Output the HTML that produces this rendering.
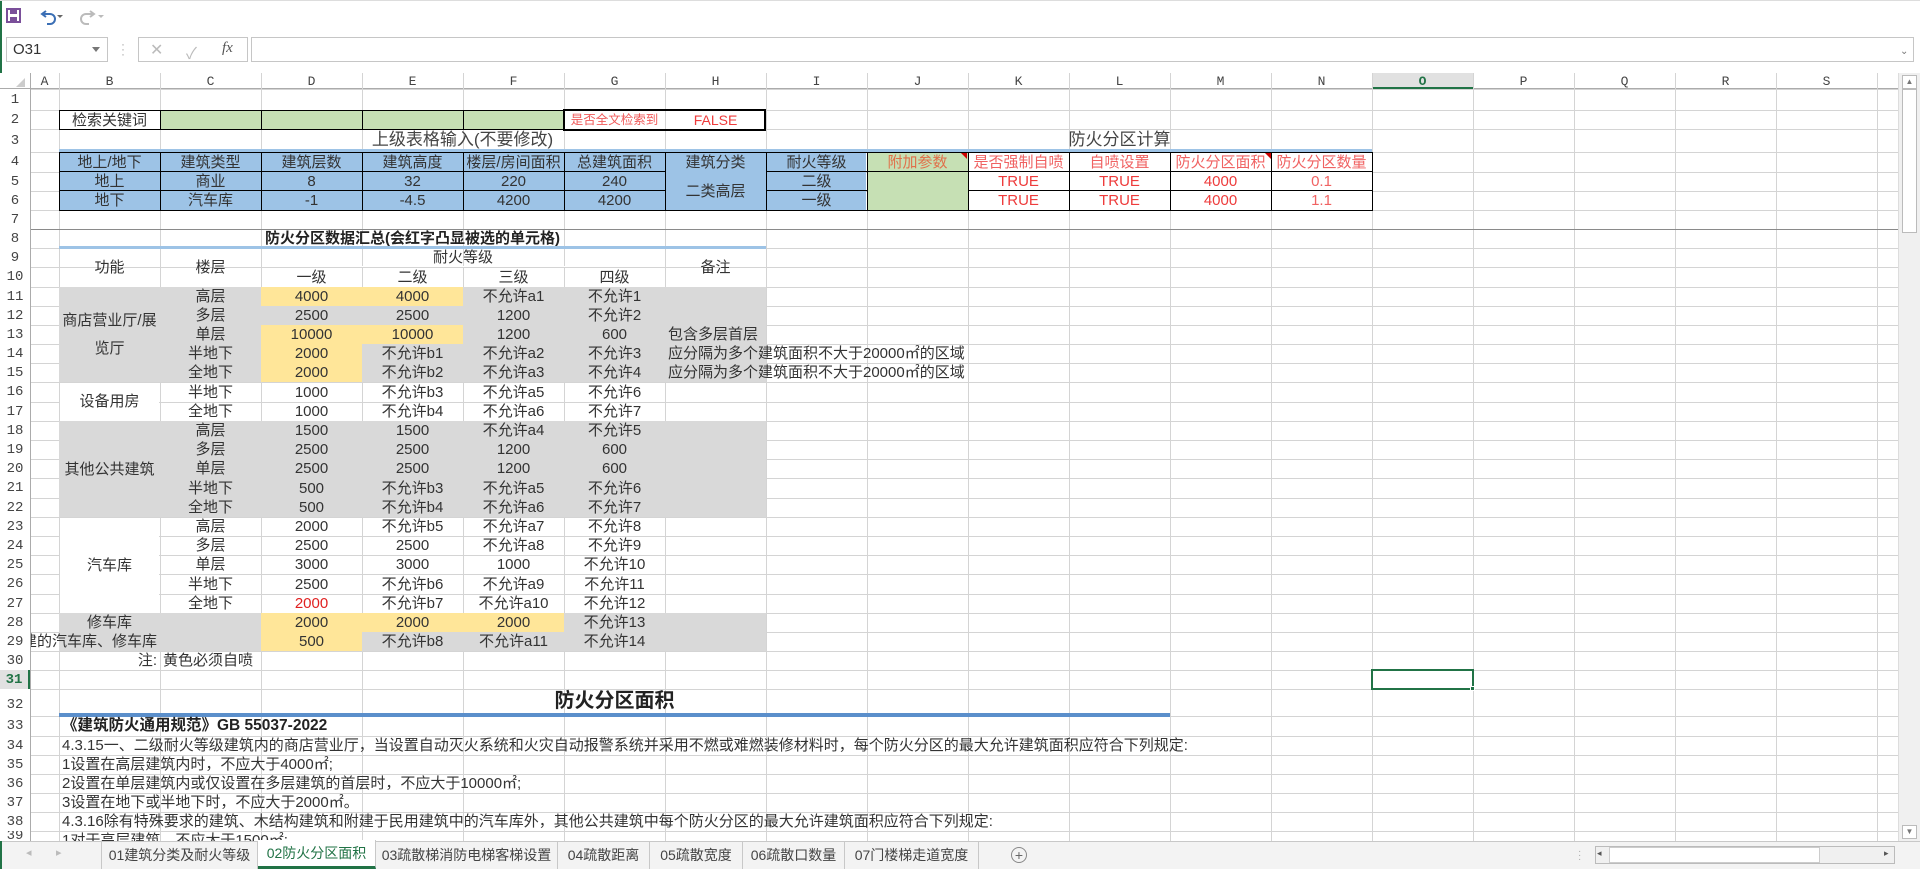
<!DOCTYPE html>
<html><head><meta charset="utf-8">
<style>
*{margin:0;padding:0;box-sizing:border-box}
body{width:1920px;height:869px;overflow:hidden;background:#fff;position:relative;font-family:"Liberation Sans","Noto Sans CJK SC",sans-serif;color:#333;font-size:15px}
.a{position:absolute}
.c{position:absolute;display:flex;align-items:center;justify-content:center;white-space:nowrap;line-height:1}
.l{justify-content:flex-start;padding-left:3px}
.r{justify-content:flex-end;padding-right:3px}
.rn{position:absolute;left:0;width:30px;display:flex;align-items:center;justify-content:center;font-size:14px;color:#444;font-family:"Liberation Mono",monospace;background:#fff}
.ch{position:absolute;top:73px;height:16px;display:flex;align-items:center;justify-content:center;font-family:"Liberation Mono",monospace;font-size:13px;color:#444}
.red{color:#ee3b3b}
.lr{color:#f06262}
.tab{position:absolute;top:841px;height:28px;display:flex;align-items:center;justify-content:center;font-size:14px;color:#444;border-right:1px solid #c8c8c8}
</style></head><body>
<!-- window edge -->
<div class="a" style="left:0;top:0;width:2px;height:869px;background:#217346"></div>
<div class="a" style="left:0;top:0;width:1920px;height:1px;background:#ddd"></div>
<!-- quick access -->
<svg class="a" style="left:6px;top:7px" width="110" height="20" viewBox="0 0 110 20">
<rect x="1" y="2" width="13" height="13" fill="none" stroke="#7a4f9a" stroke-width="2"/>
<rect x="4" y="3" width="7" height="4" fill="#7a4f9a"/>
<rect x="4" y="10" width="7" height="5" fill="#7a4f9a"/>
<path d="M40 4 L36 7 L40 10 M36 7 H44 A5 5 0 0 1 44 17 H41" fill="none" stroke="#3b6fb5" stroke-width="2"/>
<path d="M51 8 l3 3 l3 -3z" fill="#666"/>
<path d="M84 4 L88 7 L84 10 M88 7 H80 A5 5 0 0 0 80 17 H83" fill="none" stroke="#bbb" stroke-width="2"/>
<path d="M92 8 l3 3 l3 -3z" fill="#bbb"/>
<path d="M117 9 h7 M118 12 l2.5 3 l2.5 -3z" transform="translate(-2,0)" stroke="#666" fill="#666"/>
</svg>
<!-- formula bar -->
<div class="a" style="left:6px;top:37px;width:102px;height:25px;border:1px solid #c6c6c6;font-size:15px;padding:3px 0 0 6px;color:#333">O31</div>
<div class="a" style="left:92px;top:47px;width:0;height:0;border-left:4px solid transparent;border-right:4px solid transparent;border-top:5px solid #777"></div>
<div class="a" style="left:121px;top:42px;color:#aaa;font-size:12px;line-height:5px">·<br>·<br>·</div>
<div class="a" style="left:138px;top:37px;width:110px;height:25px;border:1px solid #c6c6c6"></div>
<div class="a" style="left:150px;top:40px;color:#bbb;font-size:16px">✕</div>
<div class="a" style="left:186px;top:40px;color:#bbb;font-size:16px">✓</div>
<div class="a" style="left:222px;top:40px;color:#555;font-size:15px;font-style:italic;font-family:'Liberation Serif',serif">fx</div>
<div class="a" style="left:251px;top:37px;width:1663px;height:25px;border:1px solid #c6c6c6"></div>
<div class="a" style="left:1900px;top:46px;color:#777;font-size:10px">⌄</div>
<!-- column header bg -->
<div class="a" style="left:0;top:73px;width:1898px;height:16px;background:#fff;border-bottom:1px solid #ababab"></div>
<div class="a" style="left:1372px;top:73px;width:101px;height:16px;background:#e1e1e1;border-bottom:2px solid #217346"></div>
<svg class="a" style="left:16px;top:78px" width="10" height="10"><path d="M9 0 V9 H0z" fill="#ccc"/></svg>

<div id="grid"></div>

<!-- fills -->
<div class="a" style="left:160px;top:110px;width:404px;height:19px;background:#c6e0b4"></div>
<div class="a" style="left:59px;top:152px;width:807px;height:58px;background:#9dc3e6"></div>
<div class="a" style="left:867px;top:152px;width:101px;height:58px;background:#c6e0b4"></div>
<div class="a" style="left:968px;top:152px;width:404px;height:58px;background:#fff"></div>
<!-- table2 region white base (merged cell hides) -->
<div class="a" style="left:60px;top:268px;width:100px;height:18px;background:#fff"></div>
<div class="a" style="left:161px;top:268px;width:99px;height:18px;background:#fff"></div>
<div class="a" style="left:666px;top:268px;width:99px;height:18px;background:#fff"></div>
<div class="a" style="left:262px;top:266px;width:402px;height:1px;background:#fff"></div>
<div class="a" style="left:60px;top:383px;width:99px;height:38px;background:#fff"></div>
<div class="a" style="left:60px;top:518px;width:99px;height:95px;background:#fff"></div>
<!-- grey -->
<div class="a" style="left:59px;top:287px;width:707px;height:95px;background:#d9d9d9"></div>
<div class="a" style="left:59px;top:421px;width:707px;height:96px;background:#d9d9d9"></div>
<div class="a" style="left:59px;top:613px;width:707px;height:38px;background:#d9d9d9"></div>
<!-- yellow -->
<div class="a" style="left:261px;top:287px;width:202px;height:19px;background:#ffe699"></div>
<div class="a" style="left:261px;top:325px;width:202px;height:19px;background:#ffe699"></div>
<div class="a" style="left:261px;top:344px;width:101px;height:38px;background:#ffe699"></div>
<div class="a" style="left:261px;top:613px;width:303px;height:19px;background:#ffe699"></div>
<div class="a" style="left:261px;top:632px;width:101px;height:19px;background:#ffe699"></div>
<!-- H grey right area overflows -->
<!-- borders table1 -->
<div class="a" style="left:59px;top:110px;width:506px;height:20px;border:1px solid #000"></div>
<div class="a" style="left:160px;top:110px;width:1px;height:20px;background:#000"></div>
<div class="a" style="left:261px;top:110px;width:1px;height:20px;background:#000"></div>
<div class="a" style="left:362px;top:110px;width:1px;height:20px;background:#000"></div>
<div class="a" style="left:463px;top:110px;width:1px;height:20px;background:#000"></div>
<div class="a" style="left:563px;top:109px;width:203px;height:22px;border:2px solid #000"></div>
<div class="a" style="left:59px;top:152px;width:1314px;height:59px;border:1px solid #000"></div>
<div class="a" style="left:59px;top:171px;width:606px;height:1px;background:#000"></div>
<div class="a" style="left:766px;top:171px;width:606px;height:1px;background:#000"></div>
<div class="a" style="left:59px;top:190px;width:606px;height:1px;background:#000"></div>
<div class="a" style="left:766px;top:190px;width:101px;height:1px;background:#000"></div>
<div class="a" style="left:968px;top:190px;width:404px;height:1px;background:#000"></div>
<div class="a" style="left:160px;top:152px;width:1px;height:58px;background:#000"></div>
<div class="a" style="left:261px;top:152px;width:1px;height:58px;background:#000"></div>
<div class="a" style="left:362px;top:152px;width:1px;height:58px;background:#000"></div>
<div class="a" style="left:463px;top:152px;width:1px;height:58px;background:#000"></div>
<div class="a" style="left:564px;top:152px;width:1px;height:58px;background:#000"></div>
<div class="a" style="left:665px;top:152px;width:1px;height:58px;background:#000"></div>
<div class="a" style="left:766px;top:152px;width:1px;height:58px;background:#000"></div>
<div class="a" style="left:867px;top:152px;width:1px;height:58px;background:#000"></div>
<div class="a" style="left:968px;top:152px;width:1px;height:58px;background:#000"></div>
<div class="a" style="left:1069px;top:152px;width:1px;height:58px;background:#000"></div>
<div class="a" style="left:1170px;top:152px;width:1px;height:58px;background:#000"></div>
<div class="a" style="left:1271px;top:152px;width:1px;height:58px;background:#000"></div>
<svg class="a" style="left:961px;top:153px" width="6" height="6"><path d="M0 0H6V6z" fill="#c00"/></svg>
<svg class="a" style="left:1265px;top:153px" width="6" height="6"><path d="M0 0H6V6z" fill="#c00"/></svg>
<!-- blue accent lines -->
<div class="a" style="left:59px;top:149px;width:1313px;height:3px;background:#9dc3e6"></div>
<div class="a" style="left:59px;top:246px;width:707px;height:3px;background:#9dc3e6"></div>
<div class="a" style="left:59px;top:713px;width:1111px;height:4px;background:#5b8fcb"></div>
<!-- freeze line -->
<div class="a" style="left:30px;top:229px;width:1868px;height:1px;background:#8a8a8a"></div>

<!-- column letters -->
<div class="ch" style="left:30px;width:29px">A</div>
<div class="ch" style="left:59px;width:101px">B</div>
<div class="ch" style="left:160px;width:101px">C</div>
<div class="ch" style="left:261px;width:101px">D</div>
<div class="ch" style="left:362px;width:101px">E</div>
<div class="ch" style="left:463px;width:101px">F</div>
<div class="ch" style="left:564px;width:101px">G</div>
<div class="ch" style="left:665px;width:101px">H</div>
<div class="ch" style="left:766px;width:101px">I</div>
<div class="ch" style="left:867px;width:101px">J</div>
<div class="ch" style="left:968px;width:101px">K</div>
<div class="ch" style="left:1069px;width:101px">L</div>
<div class="ch" style="left:1170px;width:101px">M</div>
<div class="ch" style="left:1271px;width:101px">N</div>
<div class="ch" style="left:1372px;width:101px;color:#217346;font-weight:bold">O</div>
<div class="ch" style="left:1473px;width:101px">P</div>
<div class="ch" style="left:1574px;width:101px">Q</div>
<div class="ch" style="left:1675px;width:101px">R</div>
<div class="ch" style="left:1776px;width:101px">S</div>

<!-- row 2 -->
<div class="c" style="left:59px;top:110px;width:101px;height:20px">检索关键词</div>
<div class="c red" style="left:564px;top:110px;width:101px;height:20px;font-size:12.5px;color:#f05a5a">是否全文检索到</div>
<div class="c red" style="left:665px;top:110px;width:101px;height:20px;font-size:14px">FALSE</div>
<!-- row 3 -->
<div class="c" style="left:59px;top:129px;width:807px;height:21px;font-size:17px;color:#444">上级表格输入(不要修改)</div>
<div class="c" style="left:867px;top:129px;width:505px;height:21px;font-size:17px;color:#444">防火分区计算</div>
<!-- row 4 -->
<div class="c" style="left:59px;top:152px;width:101px;height:20px">地上/地下</div>
<div class="c" style="left:160px;top:152px;width:101px;height:20px">建筑类型</div>
<div class="c" style="left:261px;top:152px;width:101px;height:20px">建筑层数</div>
<div class="c" style="left:362px;top:152px;width:101px;height:20px">建筑高度</div>
<div class="c" style="left:463px;top:152px;width:101px;height:20px">楼层/房间面积</div>
<div class="c" style="left:564px;top:152px;width:101px;height:20px">总建筑面积</div>
<div class="c" style="left:665px;top:152px;width:101px;height:20px">建筑分类</div>
<div class="c" style="left:766px;top:152px;width:101px;height:20px">耐火等级</div>
<div class="c" style="left:867px;top:152px;width:101px;height:20px;color:#e0704a">附加参数</div>
<div class="c lr" style="left:968px;top:152px;width:101px;height:20px">是否强制自喷</div>
<div class="c lr" style="left:1069px;top:152px;width:101px;height:20px">自喷设置</div>
<div class="c lr" style="left:1170px;top:152px;width:101px;height:20px">防火分区面积</div>
<div class="c lr" style="left:1271px;top:152px;width:101px;height:20px">防火分区数量</div>
<!-- row 5 -->
<div class="c" style="left:59px;top:172px;width:101px;height:19px">地上</div>
<div class="c" style="left:160px;top:172px;width:101px;height:19px">商业</div>
<div class="c" style="left:261px;top:172px;width:101px;height:19px">8</div>
<div class="c" style="left:362px;top:172px;width:101px;height:19px">32</div>
<div class="c" style="left:463px;top:172px;width:101px;height:19px">220</div>
<div class="c" style="left:564px;top:172px;width:101px;height:19px">240</div>
<div class="c" style="left:665px;top:172px;width:101px;height:38px">二类高层</div>
<div class="c" style="left:766px;top:172px;width:101px;height:19px">二级</div>
<div class="c red" style="left:968px;top:172px;width:101px;height:19px">TRUE</div>
<div class="c red" style="left:1069px;top:172px;width:101px;height:19px">TRUE</div>
<div class="c red" style="left:1170px;top:172px;width:101px;height:19px">4000</div>
<div class="c lr" style="left:1271px;top:172px;width:101px;height:19px">0.1</div>
<!-- row 6 -->
<div class="c" style="left:59px;top:191px;width:101px;height:19px">地下</div>
<div class="c" style="left:160px;top:191px;width:101px;height:19px">汽车库</div>
<div class="c" style="left:261px;top:191px;width:101px;height:19px">-1</div>
<div class="c" style="left:362px;top:191px;width:101px;height:19px">-4.5</div>
<div class="c" style="left:463px;top:191px;width:101px;height:19px">4200</div>
<div class="c" style="left:564px;top:191px;width:101px;height:19px">4200</div>
<div class="c" style="left:766px;top:191px;width:101px;height:19px">一级</div>
<div class="c red" style="left:968px;top:191px;width:101px;height:19px">TRUE</div>
<div class="c red" style="left:1069px;top:191px;width:101px;height:19px">TRUE</div>
<div class="c red" style="left:1170px;top:191px;width:101px;height:19px">4000</div>
<div class="c lr" style="left:1271px;top:191px;width:101px;height:19px">1.1</div>

<!-- row 8 -->
<div class="c" style="left:59px;top:229px;width:707px;height:18px;font-weight:bold;color:#222">防火分区数据汇总(会红字凸显被选的单元格)</div>
<!-- rows 9-10 -->
<div class="c" style="left:59px;top:248px;width:101px;height:39px">功能</div>
<div class="c" style="left:160px;top:248px;width:101px;height:39px">楼层</div>
<div class="c" style="left:261px;top:248px;width:404px;height:19px">耐火等级</div>
<div class="c" style="left:665px;top:248px;width:101px;height:39px">备注</div>
<div class="c" style="left:261px;top:267px;width:101px;height:20px">一级</div>
<div class="c" style="left:362px;top:267px;width:101px;height:20px">二级</div>
<div class="c" style="left:463px;top:267px;width:101px;height:20px">三级</div>
<div class="c" style="left:564px;top:267px;width:101px;height:20px">四级</div>
<!-- B merged labels -->
<div class="c" style="left:59px;top:287px;width:101px;height:95px;white-space:normal;text-align:center;line-height:28px">商店营业厅/展览厅</div>
<div class="c" style="left:59px;top:382px;width:101px;height:39px">设备用房</div>
<div class="c" style="left:59px;top:421px;width:101px;height:96px">其他公共建筑</div>
<div class="c" style="left:59px;top:517px;width:101px;height:96px">汽车库</div>
<div class="c" style="left:59px;top:613px;width:101px;height:19px">修车库</div>
<div class="c r" style="left:30px;top:632px;width:130px;height:19px;overflow:hidden;justify-content:flex-end">附建的汽车库、修车库</div>
<div class="c r" style="left:59px;top:651px;width:101px;height:19px">注:</div>
<div class="c l" style="left:160px;top:651px;width:150px;height:19px">黄色必须自喷</div>

<div id="t2"></div>
<!-- table 2 data rows 11-29 -->
<div class="c" style="left:160px;top:287px;width:101px;height:19px">高层</div><div class="c" style="left:261px;top:287px;width:101px;height:19px">4000</div><div class="c" style="left:362px;top:287px;width:101px;height:19px">4000</div><div class="c" style="left:463px;top:287px;width:101px;height:19px">不允许a1</div><div class="c" style="left:564px;top:287px;width:101px;height:19px">不允许1</div>
<div class="c" style="left:160px;top:306px;width:101px;height:19px">多层</div><div class="c" style="left:261px;top:306px;width:101px;height:19px">2500</div><div class="c" style="left:362px;top:306px;width:101px;height:19px">2500</div><div class="c" style="left:463px;top:306px;width:101px;height:19px">1200</div><div class="c" style="left:564px;top:306px;width:101px;height:19px">不允许2</div>
<div class="c" style="left:160px;top:325px;width:101px;height:19px">单层</div><div class="c" style="left:261px;top:325px;width:101px;height:19px">10000</div><div class="c" style="left:362px;top:325px;width:101px;height:19px">10000</div><div class="c" style="left:463px;top:325px;width:101px;height:19px">1200</div><div class="c" style="left:564px;top:325px;width:101px;height:19px">600</div><div class="c l" style="left:665px;top:325px;width:101px;height:19px">包含多层首层</div>
<div class="c" style="left:160px;top:344px;width:101px;height:19px">半地下</div><div class="c" style="left:261px;top:344px;width:101px;height:19px">2000</div><div class="c" style="left:362px;top:344px;width:101px;height:19px">不允许b1</div><div class="c" style="left:463px;top:344px;width:101px;height:19px">不允许a2</div><div class="c" style="left:564px;top:344px;width:101px;height:19px">不允许3</div><div class="c l" style="left:665px;top:344px;width:340px;height:19px">应分隔为多个建筑面积不大于20000㎡的区域</div>
<div class="c" style="left:160px;top:363px;width:101px;height:19px">全地下</div><div class="c" style="left:261px;top:363px;width:101px;height:19px">2000</div><div class="c" style="left:362px;top:363px;width:101px;height:19px">不允许b2</div><div class="c" style="left:463px;top:363px;width:101px;height:19px">不允许a3</div><div class="c" style="left:564px;top:363px;width:101px;height:19px">不允许4</div><div class="c l" style="left:665px;top:363px;width:340px;height:19px">应分隔为多个建筑面积不大于20000㎡的区域</div>
<div class="c" style="left:160px;top:382px;width:101px;height:20px">半地下</div><div class="c" style="left:261px;top:382px;width:101px;height:20px">1000</div><div class="c" style="left:362px;top:382px;width:101px;height:20px">不允许b3</div><div class="c" style="left:463px;top:382px;width:101px;height:20px">不允许a5</div><div class="c" style="left:564px;top:382px;width:101px;height:20px">不允许6</div>
<div class="c" style="left:160px;top:402px;width:101px;height:19px">全地下</div><div class="c" style="left:261px;top:402px;width:101px;height:19px">1000</div><div class="c" style="left:362px;top:402px;width:101px;height:19px">不允许b4</div><div class="c" style="left:463px;top:402px;width:101px;height:19px">不允许a6</div><div class="c" style="left:564px;top:402px;width:101px;height:19px">不允许7</div>
<div class="c" style="left:160px;top:421px;width:101px;height:19px">高层</div><div class="c" style="left:261px;top:421px;width:101px;height:19px">1500</div><div class="c" style="left:362px;top:421px;width:101px;height:19px">1500</div><div class="c" style="left:463px;top:421px;width:101px;height:19px">不允许a4</div><div class="c" style="left:564px;top:421px;width:101px;height:19px">不允许5</div>
<div class="c" style="left:160px;top:440px;width:101px;height:19px">多层</div><div class="c" style="left:261px;top:440px;width:101px;height:19px">2500</div><div class="c" style="left:362px;top:440px;width:101px;height:19px">2500</div><div class="c" style="left:463px;top:440px;width:101px;height:19px">1200</div><div class="c" style="left:564px;top:440px;width:101px;height:19px">600</div>
<div class="c" style="left:160px;top:459px;width:101px;height:19px">单层</div><div class="c" style="left:261px;top:459px;width:101px;height:19px">2500</div><div class="c" style="left:362px;top:459px;width:101px;height:19px">2500</div><div class="c" style="left:463px;top:459px;width:101px;height:19px">1200</div><div class="c" style="left:564px;top:459px;width:101px;height:19px">600</div>
<div class="c" style="left:160px;top:478px;width:101px;height:20px">半地下</div><div class="c" style="left:261px;top:478px;width:101px;height:20px">500</div><div class="c" style="left:362px;top:478px;width:101px;height:20px">不允许b3</div><div class="c" style="left:463px;top:478px;width:101px;height:20px">不允许a5</div><div class="c" style="left:564px;top:478px;width:101px;height:20px">不允许6</div>
<div class="c" style="left:160px;top:498px;width:101px;height:19px">全地下</div><div class="c" style="left:261px;top:498px;width:101px;height:19px">500</div><div class="c" style="left:362px;top:498px;width:101px;height:19px">不允许b4</div><div class="c" style="left:463px;top:498px;width:101px;height:19px">不允许a6</div><div class="c" style="left:564px;top:498px;width:101px;height:19px">不允许7</div>
<div class="c" style="left:160px;top:517px;width:101px;height:19px">高层</div><div class="c" style="left:261px;top:517px;width:101px;height:19px">2000</div><div class="c" style="left:362px;top:517px;width:101px;height:19px">不允许b5</div><div class="c" style="left:463px;top:517px;width:101px;height:19px">不允许a7</div><div class="c" style="left:564px;top:517px;width:101px;height:19px">不允许8</div>
<div class="c" style="left:160px;top:536px;width:101px;height:19px">多层</div><div class="c" style="left:261px;top:536px;width:101px;height:19px">2500</div><div class="c" style="left:362px;top:536px;width:101px;height:19px">2500</div><div class="c" style="left:463px;top:536px;width:101px;height:19px">不允许a8</div><div class="c" style="left:564px;top:536px;width:101px;height:19px">不允许9</div>
<div class="c" style="left:160px;top:555px;width:101px;height:19px">单层</div><div class="c" style="left:261px;top:555px;width:101px;height:19px">3000</div><div class="c" style="left:362px;top:555px;width:101px;height:19px">3000</div><div class="c" style="left:463px;top:555px;width:101px;height:19px">1000</div><div class="c" style="left:564px;top:555px;width:101px;height:19px">不允许10</div>
<div class="c" style="left:160px;top:574px;width:101px;height:20px">半地下</div><div class="c" style="left:261px;top:574px;width:101px;height:20px">2500</div><div class="c" style="left:362px;top:574px;width:101px;height:20px">不允许b6</div><div class="c" style="left:463px;top:574px;width:101px;height:20px">不允许a9</div><div class="c" style="left:564px;top:574px;width:101px;height:20px">不允许11</div>
<div class="c" style="left:160px;top:594px;width:101px;height:19px">全地下</div><div class="c" style="left:261px;top:594px;width:101px;height:19px;color:#e02020">2000</div><div class="c" style="left:362px;top:594px;width:101px;height:19px">不允许b7</div><div class="c" style="left:463px;top:594px;width:101px;height:19px">不允许a10</div><div class="c" style="left:564px;top:594px;width:101px;height:19px">不允许12</div>
<div class="c" style="left:261px;top:613px;width:101px;height:19px">2000</div><div class="c" style="left:362px;top:613px;width:101px;height:19px">2000</div><div class="c" style="left:463px;top:613px;width:101px;height:19px">2000</div><div class="c" style="left:564px;top:613px;width:101px;height:19px">不允许13</div>
<div class="c" style="left:261px;top:632px;width:101px;height:19px">500</div><div class="c" style="left:362px;top:632px;width:101px;height:19px">不允许b8</div><div class="c" style="left:463px;top:632px;width:101px;height:19px">不允许a11</div><div class="c" style="left:564px;top:632px;width:101px;height:19px">不允许14</div>

<!-- selected cell -->
<div class="a" style="left:1371px;top:669px;width:103px;height:21px;border:2px solid #217346"></div>
<div class="a" style="left:1470px;top:686px;width:5px;height:5px;background:#217346;border:1px solid #fff"></div>

<!-- row 32+ -->
<div class="c" style="left:59px;top:689px;width:1111px;height:24px;font-size:20px;font-weight:bold;color:#222">防火分区面积</div>
<div class="c l" style="left:59px;top:716px;width:600px;height:20px;font-weight:bold;color:#222;font-size:15.5px">《建筑防火通用规范》GB 55037-2022</div>
<div class="c l" style="left:59px;top:736px;width:1200px;height:19px">4.3.15一、二级耐火等级建筑内的商店营业厅，当设置自动灭火系统和火灾自动报警系统并采用不燃或难燃装修材料时，每个防火分区的最大允许建筑面积应符合下列规定:</div>
<div class="c l" style="left:59px;top:755px;width:600px;height:19px">1设置在高层建筑内时，不应大于4000㎡;</div>
<div class="c l" style="left:59px;top:774px;width:600px;height:19px">2设置在单层建筑内或仅设置在多层建筑的首层时，不应大于10000㎡;</div>
<div class="c l" style="left:59px;top:793px;width:600px;height:19px">3设置在地下或半地下时，不应大于2000㎡。</div>
<div class="c l" style="left:59px;top:812px;width:1200px;height:19px">4.3.16除有特殊要求的建筑、木结构建筑和附建于民用建筑中的汽车库外，其他公共建筑中每个防火分区的最大允许建筑面积应符合下列规定:</div>
<div class="c l" style="left:59px;top:831px;width:600px;height:19px">1对于高层建筑，不应大于1500㎡;</div>

<!-- row numbers -->
<div id="rns">
<div class="rn" style="top:89px;height:21px">1</div>
<div class="rn" style="top:110px;height:19px">2</div>
<div class="rn" style="top:129px;height:23px">3</div>
<div class="rn" style="top:152px;height:20px">4</div>
<div class="rn" style="top:172px;height:19px">5</div>
<div class="rn" style="top:191px;height:19px">6</div>
<div class="rn" style="top:210px;height:19px">7</div>
<div class="rn" style="top:229px;height:19px">8</div>
<div class="rn" style="top:248px;height:19px">9</div>
<div class="rn" style="top:267px;height:20px">10</div>
<div class="rn" style="top:287px;height:19px">11</div>
<div class="rn" style="top:306px;height:19px">12</div>
<div class="rn" style="top:325px;height:19px">13</div>
<div class="rn" style="top:344px;height:19px">14</div>
<div class="rn" style="top:363px;height:19px">15</div>
<div class="rn" style="top:382px;height:20px">16</div>
<div class="rn" style="top:402px;height:19px">17</div>
<div class="rn" style="top:421px;height:19px">18</div>
<div class="rn" style="top:440px;height:19px">19</div>
<div class="rn" style="top:459px;height:19px">20</div>
<div class="rn" style="top:478px;height:20px">21</div>
<div class="rn" style="top:498px;height:19px">22</div>
<div class="rn" style="top:517px;height:19px">23</div>
<div class="rn" style="top:536px;height:19px">24</div>
<div class="rn" style="top:555px;height:19px">25</div>
<div class="rn" style="top:574px;height:20px">26</div>
<div class="rn" style="top:594px;height:19px">27</div>
<div class="rn" style="top:613px;height:19px">28</div>
<div class="rn" style="top:632px;height:19px">29</div>
<div class="rn" style="top:651px;height:19px">30</div>
<div class="rn" style="top:670px;height:19px;background:#e1e1e1;color:#217346;font-weight:bold;border-right:2px solid #217346">31</div>
<div class="rn" style="top:689px;height:27px;align-items:flex-end;padding-bottom:3px">32</div>
<div class="rn" style="top:716px;height:20px">33</div>
<div class="rn" style="top:736px;height:19px">34</div>
<div class="rn" style="top:755px;height:19px">35</div>
<div class="rn" style="top:774px;height:19px">36</div>
<div class="rn" style="top:793px;height:19px">37</div>
<div class="rn" style="top:812px;height:19px">38</div>
<div class="rn" style="top:831px;height:10px;overflow:hidden">39</div>
</div>
<div class="a" style="left:30px;top:73px;width:1px;height:768px;background:#ababab"></div>

<!-- vertical scrollbar -->
<div class="a" style="left:1898px;top:73px;width:22px;height:768px;background:#f0f0f0;border-left:1px solid #ddd"></div>
<div class="a" style="left:1902px;top:75px;width:15px;height:14px;border:1px solid #bbb;background:#fff;font-size:8px;color:#777;text-align:center;line-height:12px">▲</div>
<div class="a" style="left:1902px;top:89px;width:15px;height:144px;border:1px solid #bbb;background:#fff"></div>
<div class="a" style="left:1902px;top:825px;width:15px;height:14px;border:1px solid #bbb;background:#fff;font-size:8px;color:#777;text-align:center;line-height:12px">▼</div>

<!-- tab bar -->
<div class="a" style="left:2px;top:841px;width:1918px;height:28px;background:#f3f3f3;border-top:1px solid #c8c8c8"></div>
<div class="a" style="left:26px;top:846px;color:#bbb;font-size:11px">◂</div>
<div class="a" style="left:56px;top:846px;color:#bbb;font-size:11px">▸</div>
<div class="tab" style="left:101px;width:157px;border-left:1px solid #c8c8c8">01建筑分类及耐火等级</div>
<div class="tab" style="left:258px;width:118px;background:#fff;color:#217346;border-bottom:3px solid #217346;top:840px;height:29px">02防火分区面积</div>
<div class="tab" style="left:376px;width:182px">03疏散梯消防电梯客梯设置</div>
<div class="tab" style="left:558px;width:92px">04疏散距离</div>
<div class="tab" style="left:650px;width:93px">05疏散宽度</div>
<div class="tab" style="left:743px;width:102px">06疏散口数量</div>
<div class="tab" style="left:845px;width:134px">07门楼梯走道宽度</div>
<div class="a" style="left:1011px;top:847px;width:16px;height:16px;border:1px solid #888;border-radius:50%;color:#666;font-size:14px;line-height:14px;text-align:center">+</div>
<div class="a" style="left:1578px;top:850px;color:#aaa;font-size:10px;line-height:4px">·<br>·<br>·</div>
<div class="a" style="left:1595px;top:846px;width:300px;height:18px;border:1px solid #bbb;background:#f0f0f0"></div>
<div class="a" style="left:1609px;top:847px;width:211px;height:16px;background:#fff;border:1px solid #ccc"></div>
<div class="a" style="left:1597px;top:848px;font-size:9px;color:#555">◂</div>
<div class="a" style="left:1884px;top:848px;font-size:9px;color:#555">▸</div>

<script>
(function(){
var g=document.getElementById('grid');
var ys=[89,110,129,152,172,191,210,229,248,267,287,306,325,344,363,382,402,421,440,459,478,498,517,536,555,574,594,613,632,651,670,689,716,736,755,774,793,812,831];
var xs=[59,160,261,362,463,564,665,766,867,968,1069,1170,1271,1372,1473,1574,1675,1776,1877];
var h='';
ys.forEach(function(y){h+='<div class="a" style="left:30px;top:'+y+'px;width:1868px;height:1px;background:#d4d4d4"></div>';
 h+='<div class="a" style="left:0;top:'+y+'px;width:30px;height:1px;background:#d4d4d4"></div>';});
xs.forEach(function(x){h+='<div class="a" style="left:'+x+'px;top:89px;width:1px;height:752px;background:#d4d4d4"></div>';
 h+='<div class="a" style="left:'+x+'px;top:73px;width:1px;height:16px;background:#d4d4d4"></div>';});
h+='<div class="a" style="left:30px;top:89px;width:1px;height:752px;background:#d4d4d4"></div>';
g.innerHTML=h;
})();
</script>
</body></html>
